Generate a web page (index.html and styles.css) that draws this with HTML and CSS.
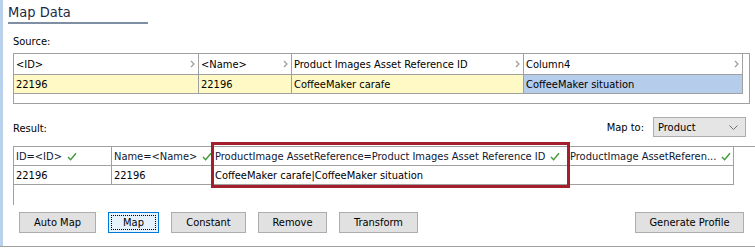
FILE: index.html
```html
<!doctype html>
<html>
  <head>
    <meta charset="utf-8" />
    <link rel="stylesheet" href="styles.css">
  </head>
  <body>
    <div class="window">
      <div class="rail"></div>
      <div class="main">
        <div class="title">Map Data</div>
        <div class="section-label source-label">Source:</div>

        <div class="source-box">
          <div class="grid source-grid">
            <div class="cell head">&lt;ID&gt;<svg class="chev" viewBox="0 0 5 8"><path d="M1 1l3 3-3 3" /></svg></div>
            <div class="cell head">&lt;Name&gt;<svg class="chev" viewBox="0 0 5 8"><path d="M1 1l3 3-3 3" /></svg></div>
            <div class="cell head">Product Images Asset Reference ID<svg class="chev" viewBox="0 0 5 8"><path d="M1 1l3 3-3 3" /></svg></div>
            <div class="cell head">Column4<svg class="chev" viewBox="0 0 5 8"><path d="M1 1l3 3-3 3" /></svg></div>
            <div class="cell row">22196</div>
            <div class="cell row">22196</div>
            <div class="cell row">CoffeeMaker carafe</div>
            <div class="cell row selected">CoffeeMaker situation</div>
          </div>
        </div>

        <div class="result-bar">
          <span class="section-label">Result:</span>
          <span class="map-to">Map to:</span>
          <div class="select">
            <span>Product</span>
            <svg class="select-arrow" viewBox="0 0 9 5"><path d="M0.5 0.5l4 4 4-4" /></svg>
          </div>
        </div>

        <div class="result-box">
          <div class="grid result-grid">
            <div class="cell head">ID=&lt;ID&gt;<svg class="check" viewBox="0 0 10 9"><path d="M1 5l2.6 2.8L9 1.2" /></svg></div>
            <div class="cell head">Name=&lt;Name&gt;<svg class="check" viewBox="0 0 10 9"><path d="M1 5l2.6 2.8L9 1.2" /></svg></div>
            <div class="cell head">ProductImage AssetReference=Product Images Asset Reference ID<svg class="check" viewBox="0 0 10 9"><path d="M1 5l2.6 2.8L9 1.2" /></svg></div>
            <div class="cell head">ProductImage AssetReferen...<svg class="check" viewBox="0 0 10 9"><path d="M1 5l2.6 2.8L9 1.2" /></svg></div>
            <div class="cell">22196</div>
            <div class="cell">22196</div>
            <div class="cell">CoffeeMaker carafe|CoffeeMaker situation</div>
            <div class="cell"></div>
          </div>
          <div class="highlight"></div>
        </div>

        <div class="buttons">
          <button class="button w-auto">Auto Map</button>
          <button class="button w-map focused">Map</button>
          <button class="button w-constant">Constant</button>
          <button class="button w-remove">Remove</button>
          <button class="button w-transform">Transform</button>
          <button class="button w-generate">Generate Profile</button>
        </div>
      </div>
    </div>
  </body>
</html>
```

FILE: styles.css
```css
* {
  box-sizing: border-box;
}

body {
  margin: 0;
  width: 755px;
  height: 251px;
  overflow: hidden;
  background: #fff;
  color: #000;
  font-family: 'DejaVu Sans Condensed', 'DejaVu Sans', sans-serif;
  font-size: 11px;
}

.window {
  display: flex;
  height: 247px;
  border-bottom: 1px solid #a0a0a0;
}

.rail {
  width: 3px;
  background: #b9d1ea;
}

.main {
  flex: 1;
  padding-left: 10px;
}

/* Title */
.title {
  margin-left: -5px;
  width: 140px;
  height: 24px;
  padding-top: 2px;
  font-size: 14.5px;
  line-height: 20px;
  color: #1c2a44;
  border-bottom: 2px solid #7f8fa3;
}

.section-label {
  line-height: 13px;
}

.source-label {
  margin-top: 11px;
}

/* Grids */
.grid {
  display: grid;
}

.cell {
  display: flex;
  align-items: center;
  justify-content: space-between;
  padding: 0 3px 0 2px;
  border-right: 1px solid #a0a0a0;
  border-bottom: 1px solid #a0a0a0;
  white-space: nowrap;
  overflow: hidden;
}

.source-box {
  margin-top: 5px;
  width: 737px;
  height: 51px;
  border: 1px solid #a0a0a0;
}

.source-grid {
  grid-template-columns: 185px 93px 232px 219px;
  grid-template-rows: 21px 19px;
}

.source-grid .cell:first-child,
.source-grid .cell:nth-child(5) {
  margin-left: -1px;
  border-left: 1px solid #a0a0a0;
}

.cell.row {
  background: #fff9c6;
}

.cell.selected {
  background: #b5cceb;
}

.chev {
  width: 5px;
  height: 8px;
  flex-shrink: 0;
}

.chev path {
  fill: none;
  stroke: #9a9a9a;
  stroke-width: 1.2;
}

/* Result bar */
.result-bar {
  display: flex;
  align-items: center;
  height: 22px;
  margin-top: 12px;
  padding-right: 9px;
}

.result-bar .section-label {
  padding-top: 2px;
}

.map-to {
  margin-left: auto;
  margin-right: 9px;
}

.select {
  width: 93px;
  height: 20px;
  display: flex;
  align-items: center;
  justify-content: space-between;
  padding: 0 7px 0 4px;
  background: #e5e5e5;
  border: 1px solid #adadad;
}

.select-arrow {
  width: 9px;
  height: 5px;
}

.select-arrow path {
  fill: none;
  stroke: #707070;
}

/* Result grid */
.result-box {
  position: relative;
  margin-top: 8px;
  height: 59px;
  border-top: 1px solid #a0a0a0;
  border-left: 1px solid #a0a0a0;
}

.result-grid {
  grid-template-columns: 98px 101px 355px 166px;
  grid-template-rows: 19px 19px;
}

.result-grid .cell {
  justify-content: flex-start;
}

.result-grid .head {
  color: #101830;
}

.check {
  width: 10px;
  height: 9px;
  flex-shrink: 0;
  margin-left: 5px;
}

.check path {
  fill: none;
  stroke: #3f9b35;
  stroke-width: 1.4;
}

.highlight {
  position: absolute;
  left: 197px;
  top: -5px;
  width: 359px;
  height: 46px;
  border: 3px solid #a41f2c;
}

/* Buttons */
.buttons {
  display: flex;
  gap: 12px;
  margin-top: 7px;
  padding: 0 11px 0 6px;
}

.button {
  position: relative;
  height: 21px;
  padding: 0;
  background: #e1e1e1;
  border: 1px solid #adadad;
  font-family: inherit;
  font-size: 11px;
  color: #000;
}

.button.focused {
  background: #e5f1fb;
  border-color: #0078d7;
}

.button.focused::after {
  content: '';
  position: absolute;
  inset: 2px;
  border: 1px dotted #000;
}

.w-auto { width: 77px; }
.w-map { width: 51px; }
.w-constant { width: 75px; }
.w-remove { width: 69px; }
.w-transform { width: 79px; }

.w-generate {
  width: 109px;
  margin-left: auto;
}
```
